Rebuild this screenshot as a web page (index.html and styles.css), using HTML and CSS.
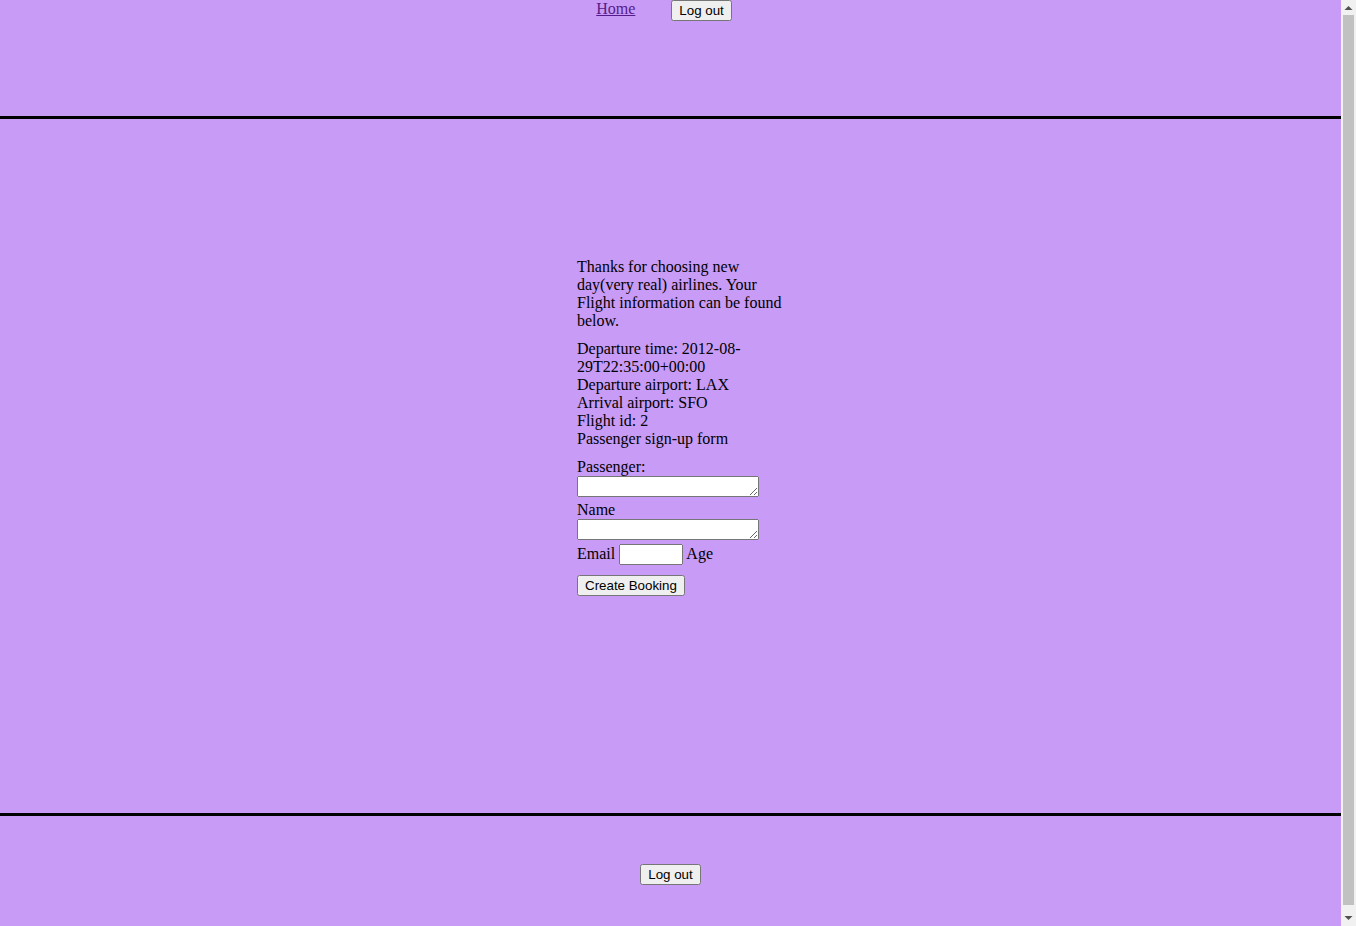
FILE: index.html
```html
<!DOCTYPE html>
<html>
<head>
<meta charset="utf-8">
<title>Booking</title>
<link rel="stylesheet" href="styles.css">
</head>
<body>
<div class="page">
  <header class="top">
    <nav class="nav">
      <a class="home-link" href="#">Home</a>
      <button class="btn">Log out</button>
    </nav>
  </header>
  <main class="main">
    <div class="column">
      <p class="block">Thanks for choosing new day(very real) airlines. Your Flight information can be found below.</p>
      <div class="block">
        <div>Departure time: 2012-08-29T22:35:00+00:00</div>
        <div>Departure airport: LAX</div>
        <div>Arrival airport: SFO</div>
        <div>Flight id: 2</div>
        <div>Passenger sign-up form</div>
      </div>
      <form class="block form">
        Passenger:<br>
        <textarea class="area" rows="1"></textarea><br>
        Name<br>
        <textarea class="area" rows="1"></textarea><br>
        Email <input class="email" type="text"> Age
        <div class="submit-row"><button class="btn" type="button">Create Booking</button></div>
      </form>
    </div>
  </main>
  <footer class="bottom">
    <button class="btn">Log out</button>
  </footer>
</div>
<div class="scrollbar" aria-hidden="true">
  <div class="sb-btn">
    <svg width="15" height="15" viewBox="0 0 15 15"><polygon points="3.5,10 7.5,6 11.5,10" fill="#505050"/></svg>
  </div>
  <div class="sb-track"><div class="sb-thumb"></div></div>
  <div class="sb-btn">
    <svg width="15" height="15" viewBox="0 0 15 15"><polygon points="3.5,5 7.5,9 11.5,5" fill="#505050"/></svg>
  </div>
</div>
</body>
</html>
```
FILE: styles.css
```css
html, body {
  margin: 0;
  padding: 0;
}
body {
  background: #c79bf6;
  color: #000;
  font-family: "Liberation Serif", "Times New Roman", serif;
  font-size: 16px;
}
.page {
  width: calc(100% - 15px);
}
.top {
  height: 116px;
  border-bottom: 3px solid #000;
}
.nav {
  display: flex;
  justify-content: center;
  align-items: baseline;
  gap: 36px;
  padding-right: 13px;
}
.home-link {
  color: #551a8b;
  position: relative;
  top: -1px;
}
.btn {
  font-family: "Liberation Sans", Arial, sans-serif;
  font-size: 13.333px;
  margin: 0;
}
.main {
  padding-top: 139px;
  height: 555px;
  border-bottom: 3px solid #000;
}
.column {
  margin-left: 577px;
  width: 215px;
}
.block {
  margin: 0 0 10px 0;
}
.area {
  width: 182px;
  height: 21px;
  box-sizing: border-box;
  margin: 0;
}
.email {
  width: 64px;
  height: 21px;
  box-sizing: border-box;
  margin: 0;
}
.submit-row {
  margin-top: 10px;
}
.bottom {
  height: 116px;
  display: flex;
  justify-content: center;
  align-items: center;
}
.scrollbar {
  position: fixed;
  top: 0;
  right: 0;
  width: 15px;
  height: 100%;
  background: #f1f1f1;
  display: flex;
  flex-direction: column;
}
.sb-btn {
  height: 15px;
  flex: none;
}
.sb-btn svg {
  display: block;
}
.sb-track {
  flex: 1;
  padding: 0 2px 6px;
  display: flex;
}
.sb-thumb {
  flex: 1;
  background: #c1c1c1;
}
```
